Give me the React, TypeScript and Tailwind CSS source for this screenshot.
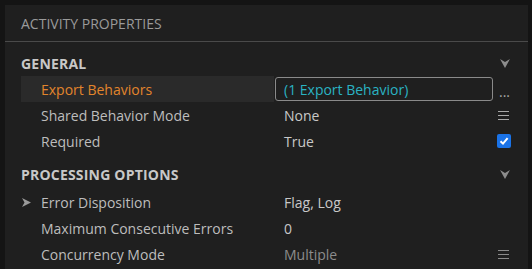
import React from "react";

const Chevron = () => (
  <svg width="10" height="9" viewBox="0 0 10 9" className="block">
    <polygon points="0,0 5,3 10,0 5,9" fill="#8c8c8c" />
  </svg>
);

const Arrow = () => (
  <svg width="9" height="9" viewBox="0 0 9 9" className="block">
    <polygon points="0,0 9,4.5 0,9 2.5,4.5" fill="#9a9a9a" />
  </svg>
);

const Burger = ({ dim }: { dim?: boolean }) => (
  <svg width="11" height="11" viewBox="0 0 11 11" className="block">
    <g stroke={dim ? "#8a8a8a" : "#a8a8a8"} strokeWidth="1">
      <line x1="0" y1="1.5" x2="11" y2="1.5" />
      <line x1="0" y1="5.5" x2="11" y2="5.5" />
      <line x1="0" y1="9.5" x2="11" y2="9.5" />
    </g>
  </svg>
);

const Check = () => (
  <div className="w-[14px] h-[14px] rounded-[2px] bg-[#1a73e8] flex items-center justify-center">
    <svg width="10" height="10" viewBox="0 0 10 10">
      <path d="M1.5 5.2 L4 7.6 L8.6 2.2" stroke="#fff" strokeWidth="2" fill="none" />
    </svg>
  </div>
);

type RowProps = {
  name: string;
  value: React.ReactNode;
  right?: React.ReactNode;
  highlight?: boolean;
  arrow?: boolean;
  nameClass?: string;
};

const Row = ({ name, value, right, highlight, arrow, nameClass }: RowProps) => (
  <div className="flex h-[26px] items-center">
    <div
      className={`w-[253px] h-full flex items-center ml-[16px] ${highlight ? "bg-[#2a2a2a]" : ""}`}
    >
      <div className="w-[20px] flex items-center pl-[1px]">{arrow ? <Arrow /> : null}</div>
      <span className={nameClass ?? "text-[#bdbdbd]"}>{name}</span>
    </div>
    <div className="flex-1 h-full flex items-center">{value}</div>
    <div className="w-[32px] h-full flex items-center">{right}</div>
  </div>
);

const Section = ({ title }: { title: string }) => (
  <div className="flex h-[26px] items-center pl-[16px] pr-[18px] justify-between">
    <span className="font-bold text-[#c8c8c8] tracking-[0.2px]">{title}</span>
    <Chevron />
  </div>
);

export default function App() {
  return (
    <div
      className="w-[532px] h-[269px] bg-[#141414] pl-[5px] pt-[5px] overflow-hidden"
      style={{ fontFamily: '"Open Sans", "Noto Sans", sans-serif' }}
    >
      <div className="w-[523px] h-[280px] bg-[#1f1f1f] text-[14px]">
        <div className="h-[35px] flex items-center pl-[16px] pt-[1px] text-[#9a9a9a] border-b border-[#4a4a4a] box-content">
          ACTIVITY PROPERTIES
        </div>
        <div className="pt-[8px]">
          <Section title="GENERAL" />
          <Row
            name="Export Behaviors"
            highlight
            nameClass="text-[#e2852c]"
            value={
              <div className="ml-[1px] w-[218px] h-[24px] border border-[#8a8a8a] rounded-[3px] flex items-center pl-[8px] text-[#2ab3c3]">
                (1 Export Behavior)
              </div>
            }
            right={<span className="text-[#a8a8a8] self-end mb-[3px] leading-none pl-[3px]">...</span>}
          />
          <Row
            name="Shared Behavior Mode"
            value={<span className="pl-[10px] text-[#c8c8c8]">None</span>}
            right={<div className="pl-[2px]"><Burger /></div>}
          />
          <Row
            name="Required"
            value={<span className="pl-[10px] text-[#c8c8c8]">True</span>}
            right={<div className="pl-[1px]"><Check /></div>}
          />
          <div className="pt-[7px]">
            <Section title="PROCESSING OPTIONS" />
          </div>
          <div className="pt-[2px]">
            <Row
              name="Error Disposition"
              arrow
              value={<span className="pl-[10px] text-[#c8c8c8]">Flag, Log</span>}
            />
            <Row
              name="Maximum Consecutive Errors"
              value={<span className="pl-[10px] text-[#c8c8c8]">0</span>}
            />
            <Row
              name="Concurrency Mode"
              value={<span className="pl-[10px] text-[#8c8c8c]">Multiple</span>}
              right={<div className="pl-[2px]"><Burger dim /></div>}
            />
          </div>
        </div>
      </div>
    </div>
  );
}
